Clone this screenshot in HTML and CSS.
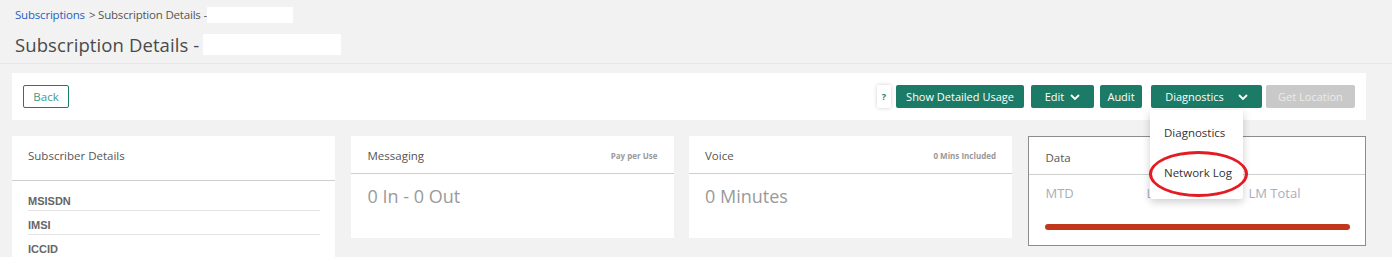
FILE: index.html
```html
<!DOCTYPE html>
<html lang="en">
<head>
<meta charset="utf-8">
<title>Subscription Details</title>
<link rel="stylesheet" href="styles.css">
</head>
<body>
<header class="page-header">
  <div class="breadcrumb"><a class="crumb-link">Subscriptions</a> &gt; Subscription Details -<span class="redact redact-small"></span></div>
  <h1 class="title">Subscription Details -<span class="redact redact-large"></span></h1>
</header>

<section class="toolbar">
  <button class="btn-outline">Back</button>
  <div class="actions">
    <span class="help">?</span>
    <button class="btn btn-usage">Show Detailed Usage</button>
    <button class="btn btn-edit">Edit <svg class="chev" viewBox="0 0 10 6"><path d="M1 1l4 4 4-4" fill="none" stroke="#fff" stroke-width="1.8"/></svg></button>
    <button class="btn btn-audit">Audit</button>
    <div class="dd">
      <button class="btn btn-diag">Diagnostics <svg class="chev" viewBox="0 0 10 6"><path d="M1 1l4 4 4-4" fill="none" stroke="#fff" stroke-width="1.8"/></svg></button>
      <ul class="menu">
        <li>Diagnostics</li>
        <li>Network Log</li>
      </ul>
      <span class="patch"></span>
      <span class="circle"></span>
    </div>
    <button class="btn btn-disabled">Get Location</button>
  </div>
</section>

<main class="cards">
  <div class="card card-sub">
    <div class="card-head tall"><span>Subscriber Details</span></div>
    <ul class="fields">
      <li>MSISDN</li>
      <li>IMSI</li>
      <li>ICCID</li>
    </ul>
  </div>
  <div class="card">
    <div class="card-head"><span>Messaging</span><small>Pay per Use</small></div>
    <div class="big">0 In - 0 Out</div>
  </div>
  <div class="card">
    <div class="card-head"><span>Voice</span><small>0 Mins Included</small></div>
    <div class="big">0 Minutes</div>
  </div>
  <div class="card card-data">
    <div class="card-head"><span>Data</span></div>
    <div class="data-cols">
      <span>MTD</span>
      <span>LM</span>
      <span>LM Total</span>
    </div>
    <div class="bar"></div>
  </div>
</main>
</body>
</html>
```

FILE: styles.css
```css
* { box-sizing: border-box; }
html, body { margin: 0; padding: 0; }
body {
  background: #f2f2f2;
  font-family: "Open Sans", "Liberation Sans", sans-serif;
  color: #555;
  width: 1392px;
  height: 257px;
  overflow: hidden;
}

.page-header {
  padding: 7px 15px 0;
  height: 64px;
  border-bottom: 1px solid #e6e6e6;
}
.breadcrumb {
  font-size: 11.5px;
  line-height: 16px;
  color: #555;
  display: flex;
  align-items: center;
  letter-spacing: -0.2px;
}
.crumb-link { color: #1f5fbf; margin-right: 4px; }
.redact { display: inline-block; background: #fff; }
.redact-small { width: 86px; height: 16px; }
.title {
  margin: 11px 0 0;
  font-size: 18.5px;
  font-weight: 400;
  color: #4a4a4a;
  line-height: 21px;
  display: flex;
  align-items: center;
  letter-spacing: 0.1px;
}
.redact-large { width: 138px; height: 21px; margin-left: 4px; }

.toolbar {
  margin: 9px 26px 0 12px;
  height: 47px;
  background: #fff;
  display: flex;
  align-items: center;
  justify-content: space-between;
  padding: 0 11px;
  position: relative;
  z-index: 2;
}
.btn-outline {
  height: 23px;
  width: 46px;
  background: #fff;
  border: 1px solid #1c7d68;
  border-radius: 2px;
  color: #3f9a8a;
  font: 11.5px "Open Sans", sans-serif;
  padding: 0;
}
.actions { display: flex; align-items: center; }
.help {
  width: 14px;
  height: 23px;
  background: #fff;
  border-radius: 2px;
  box-shadow: 0 0 4px rgba(0,0,0,0.18);
  color: #1c7d68;
  font-size: 9px;
  font-weight: 700;
  display: flex;
  align-items: center;
  justify-content: center;
  margin-right: 5px;
}
.btn {
  height: 23px;
  border: none;
  border-radius: 2px;
  background: #1b7b66;
  color: #fff;
  font: 11px "Open Sans", sans-serif;
  padding: 0;
  display: flex;
  align-items: center;
  justify-content: center;
  gap: 6px;
}
.chev { width: 10px; height: 6px; }
.btn-usage { width: 128px; margin-right: 7px; }
.btn-edit { width: 63px; margin-right: 6px; }
.btn-audit { width: 42px; margin-right: 9px; }
.btn-diag { width: 111px; gap: 14px; }
.dd { position: relative; margin-right: 4px; }
.btn-disabled { width: 89px; background: #c9c9c9; color: #ececec; }

.menu {
  position: absolute;
  top: 25px;
  left: -1px;
  width: 93px;
  height: 89px;
  margin: 0;
  padding: 0;
  list-style: none;
  background: #fff;
  box-shadow: 0 3px 8px rgba(0,0,0,0.2);
  border-radius: 0 0 3px 3px;
  font-size: 11.5px;
  color: #333;
  z-index: 2;
}
.menu li { padding-left: 14px; height: 40px; line-height: 20px; }
.menu li:first-child { padding-top: 13px; height: 53px; }
.patch {
  position: absolute;
  top: 112px;
  left: 47px;
  width: 45px;
  height: 10px;
  background: #fff;
  z-index: 1;
}
.circle {
  position: absolute;
  left: -2px;
  top: 66px;
  width: 99px;
  height: 46px;
  border: 3.5px solid #e41b23;
  border-radius: 50%;
  z-index: 3;
}

.cards {
  display: grid;
  grid-template-columns: 323px 323px 323px 1fr;
  column-gap: 15.5px;
  margin: 16px 26px 0 12px;
  align-items: start;
}
.card { background: #fff; height: 102px; }
.card-sub { height: 130px; }
.card-head {
  height: 38px;
  border-bottom: 1px solid #cfcfcf;
  display: flex;
  align-items: center;
  justify-content: space-between;
  padding: 2px 16px 0 17px;
  font-size: 11.5px;
  color: #555;
}
.card-head small { font-size: 8px; font-weight: 700; color: #999; }
.card-head.tall { height: 45px; padding-left: 16px; padding-top: 0; padding-bottom: 5px; }
.card:nth-child(3) .card-head { padding-left: 16px; }
.big {
  padding: 10px 17px 0;
  font-size: 18px;
  color: #9a9a9a;
  line-height: 24px;
}
.card:nth-child(3) .big { padding-left: 16px; }
.fields { list-style: none; margin: 0; padding: 6px 15px 0 16px; }
.fields li {
  font-family: "Liberation Sans", Arial, sans-serif;
  font-size: 11px;
  font-weight: 700;
  color: #666;
  height: 24px;
  line-height: 24px;
  border-bottom: 1px solid #e4e4e4;
  padding-top: 2px;
}
.card-data {
  border: 1px solid #8c8c8c;
  height: 110px;
}
.card-data .card-head { padding-left: 17px; padding-top: 4px; }
.data-cols {
  display: grid;
  grid-template-columns: 101px 102px 1fr;
  padding: 9px 17px 0;
  font-size: 13px;
  color: #a9aebb;
}
.bar {
  height: 6px;
  background: #c2361c;
  border-radius: 3px;
  margin: 22px 15px 0 16px;
}
```
